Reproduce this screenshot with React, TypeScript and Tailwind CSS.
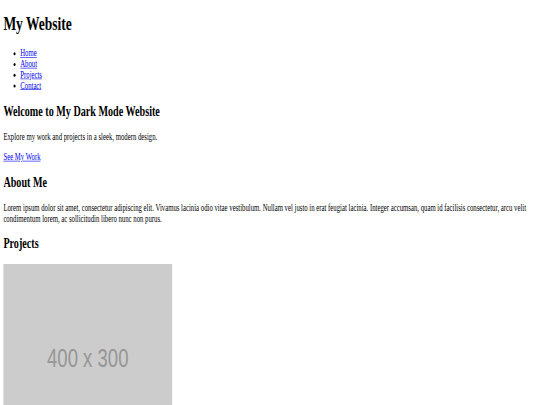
const links = ['Home', 'About', 'Projects', 'Contact'];

export default function App() {
  return (
    <div className="h-[405px] w-[540px] overflow-hidden bg-white">
      {/* page laid out at 1280px, squashed into the window */}
      <div className="flow-root w-[1280px] origin-top-left scale-x-[0.421875] scale-y-[0.6] px-2 [font-family:'Liberation_Serif','Times_New_Roman',serif] text-base leading-[normal] text-black">
        <header>
          <h1 className="my-[21.44px] text-[32px] font-bold">My Website</h1>
          <nav>
            <ul className="my-4 list-disc pl-10">
              {links.map((label) => (
                <li key={label}>
                  <a href="#" className="text-[#0000ee] underline">
                    {label}
                  </a>
                </li>
              ))}
            </ul>
          </nav>
        </header>

        <section>
          <h2 className="my-[19.92px] text-2xl leading-[normal] font-bold">Welcome to My Dark Mode Website</h2>
          <p className="my-4">Explore my work and projects in a sleek, modern design.</p>
          <p className="my-4">
            <a href="#" className="text-[#0000ee] underline">
              See My Work
            </a>
          </p>
        </section>

        <section>
          <h2 className="my-[19.92px] text-2xl leading-[normal] font-bold">About Me</h2>
          <p className="my-4">
            Lorem ipsum dolor sit amet, consectetur adipiscing elit. Vivamus lacinia odio vitae vestibulum. Nullam
            vel justo in erat feugiat lacinia. Integer accumsan, quam id facilisis consectetur, arcu velit
            condimentum lorem, ac sollicitudin libero nunc non purus.
          </p>
        </section>

        <section>
          <h2 className="my-[19.92px] text-2xl leading-[normal] font-bold">Projects</h2>
          <div className="flex h-[300px] w-[400px] items-center justify-center bg-[#cccccc] pt-3 [font-family:'Liberation_Sans',Arial,sans-serif] text-[44px] text-[#969696]">
            400 x 300
          </div>
        </section>
      </div>
    </div>
  );
}
